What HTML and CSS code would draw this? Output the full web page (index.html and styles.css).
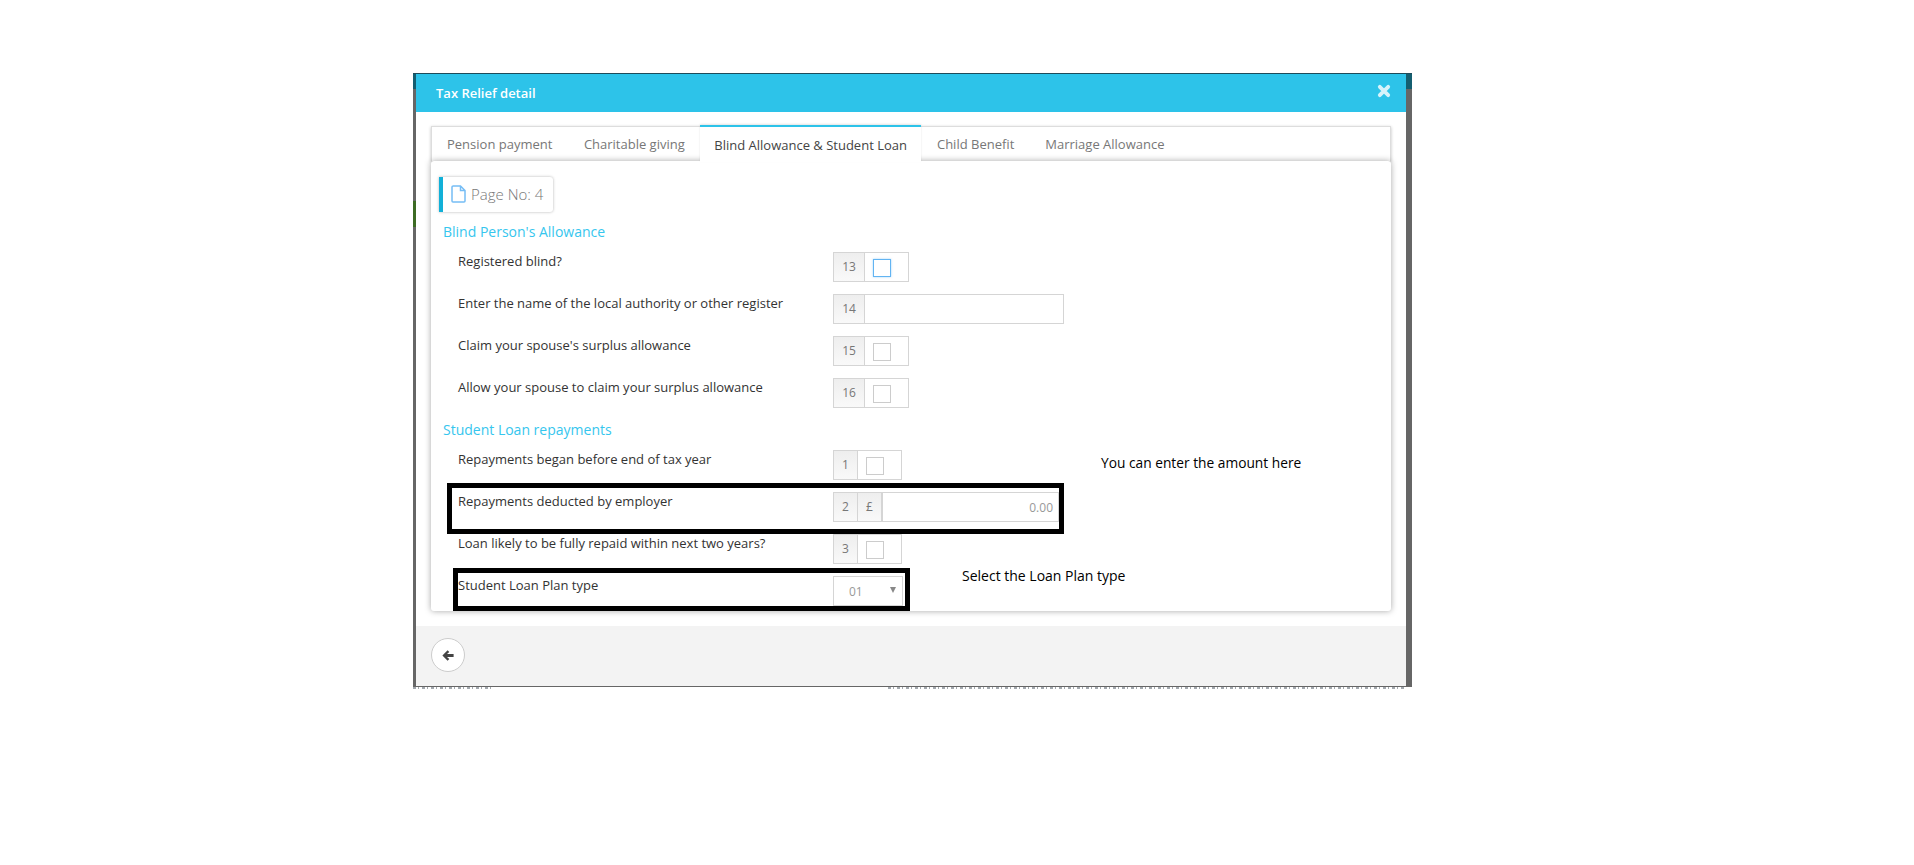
FILE: index.html
```html
<!DOCTYPE html>
<html lang="en">
<head>
<meta charset="utf-8">
<title>Tax Relief detail</title>
<link rel="stylesheet" href="styles.css">
</head>
<body>
<div class="backdrop">
  <div class="modal">
    <header class="modal-head">
      <span class="modal-title">Tax Relief detail</span>
      <svg class="close" viewBox="0 0 14 14" width="14" height="14"><path d="M2.8 2.8 L11.2 11.2 M11.2 2.8 L2.8 11.2"/></svg>
    </header>
    <div class="modal-body">
      <nav class="tabs">
        <a class="tab tab-first">Pension payment</a>
        <a class="tab tab-second">Charitable giving</a>
        <a class="tab tab-active">Blind Allowance &amp; Student Loan</a>
        <a class="tab tab-fourth">Child Benefit</a>
        <a class="tab">Marriage Allowance</a>
      </nav>
      <section class="panel">
        <div class="page-no">
          <svg class="file" viewBox="0 0 15 18" width="15" height="18"><path d="M1.5 1 H9.5 L14 5.5 V16 Q14 17 13 17 H2 Q1 17 1 16 V2 Q1 1 2 1 Z M9.5 1 V5.5 H14"/></svg>
          <span>Page No: 4</span>
        </div>
        <h3 class="section">Blind Person's Allowance</h3>
        <div class="row"><label>Registered blind?</label>
          <div class="field"><span class="addon a32">13</span><span class="check-cell"><i class="check focus"></i></span></div></div>
        <div class="row"><label>Enter the name of the local authority or other register</label>
          <div class="field"><span class="addon a32">14</span><span class="text-cell"></span></div></div>
        <div class="row"><label>Claim your spouse's surplus allowance</label>
          <div class="field"><span class="addon a32">15</span><span class="check-cell"><i class="check"></i></span></div></div>
        <div class="row"><label>Allow your spouse to claim your surplus allowance</label>
          <div class="field"><span class="addon a32">16</span><span class="check-cell"><i class="check"></i></span></div></div>
        <h3 class="section section-2">Student Loan repayments</h3>
        <div class="row"><label>Repayments began before end of tax year</label>
          <div class="field"><span class="addon a24">1</span><span class="check-cell"><i class="check"></i></span></div></div>
        <div class="row"><label>Repayments deducted by employer</label>
          <div class="field"><span class="addon a24">2</span><span class="addon a25">£</span><span class="amount">0.00</span></div></div>
        <div class="row"><label>Loan likely to be fully repaid within next two years?</label>
          <div class="field"><span class="addon a24">3</span><span class="check-cell"><i class="check"></i></span></div></div>
        <div class="row"><label>Student Loan Plan type</label>
          <div class="field"><span class="select">01<b class="caret"></b></span></div></div>
      </section>
    </div>
    <footer class="modal-foot">
      <button class="back" type="button"><svg viewBox="0 0 12 11" width="12" height="11"><path d="M5.6 0.3 L7.3 2 L5 4 H11.6 V7 H5 L7.3 9 L5.6 10.7 L0.4 5.5 Z"/></svg></button>
    </footer>
  </div>
</div>
<div class="residue residue-left"></div>
<div class="residue residue-right"></div>
<div class="mark mark-amount"></div>
<div class="mark mark-plan"></div>
<p class="note note-amount">You can enter the amount here</p>
<p class="note note-plan">Select the Loan Plan type</p>
</body>
</html>
```
FILE: styles.css
```css
* { box-sizing: border-box; }
html, body { margin: 0; padding: 0; }
body { position: relative; min-height: 865px; background: #fff; font-family: "Open Sans", sans-serif; color: #333; overflow: hidden; }
.backdrop {
  width: 999px; height: 614px; margin: 73px 0 0 413px; padding: 1px 6px 1px 3px;
  background:
    linear-gradient(#1d4b5a 1px, #145e70 1px, #145e70 16px, transparent 16px) no-repeat,
    linear-gradient(transparent 128px, #3d6b24 128px, #3d6b24 154px, transparent 154px) no-repeat 0 0 / 3px 100%,
    #666;
}
.modal { width: 990px; height: 612px; display: flex; flex-direction: column; background: #fff; }
.modal-head { height: 38px; flex: none; display: flex; align-items: center; justify-content: space-between; padding: 0 15px 0 20px; background: #2dc3e9; color: #fff; }
.modal-title { font-size: 13px; font-weight: 600; }
.close { margin-bottom: 5px; fill: none; stroke: #d6f3fb; stroke-width: 3.8; stroke-linecap: round; }
.modal-body { flex: 1; padding: 14px 15px 15px; }
.tabs { display: flex; height: 35px; background: #fff; border: 1px solid #ddd; border-bottom: 0; box-shadow: 0 1px 3px rgba(0,0,0,.25); }
.tab { padding: 7px 16px 0; font-size: 13px; line-height: 20px; color: #777; }
.tab-first { padding-left: 15px; padding-right: 15.5px; }
.tab-second { padding-right: 15.5px; }
.tab-fourth { padding-right: 15px; }
.tab-active { position: relative; top: -2px; height: 37px; padding: 8px 14px 0; color: #444; background: #fff; border-top: 2px solid #2dc3e9; box-shadow: 0 -1px 2px rgba(0,0,0,.1); z-index: 2; }
.panel { position: relative; height: 450px; padding: 16px 8px 0; background: #fff; border-radius: 3px; box-shadow: 0 0 6px rgba(0,0,0,.35); }
.page-no { display: flex; align-items: center; gap: 5px; width: 114px; height: 35px; padding: 0 0 2px 8px; font-size: 15px; font-weight: 300; color: #777; background: #fff; border-left: 4px solid #11b0d8; border-radius: 0 3px 3px 0; box-shadow: 0 0 3px rgba(0,0,0,.3); }
.file { fill: none; stroke: #76bdf5; stroke-width: 1.5; }
.section { margin: 10px 0 10px 4px; font-size: 14px; line-height: 20px; font-weight: 400; color: #36c6ee; }
.section-2 { margin-top: 12px; }
.row { display: flex; height: 30px; margin-bottom: 12px; padding-left: 19px; }
.row:last-child { margin-bottom: 0; }
.row label { width: 375px; flex: none; font-size: 13px; line-height: 18px; color: #333; }
.field { display: flex; height: 30px; }
.addon { display: flex; align-items: center; justify-content: center; height: 30px; padding-bottom: 2px; font-size: 12px; color: #777; background: linear-gradient(#eee, #f9f9f9); border: 1px solid #d5d5d5; border-right: 0; }
.a32 { width: 31px; }
.a24 { width: 24px; }
.a25 { width: 24px; }
.check-cell { display: flex; align-items: center; width: 45px; padding-left: 8px; height: 30px; border: 1px solid #d5d5d5; }
.check { display: block; width: 18px; height: 18px; margin-top: 2px; background: #fff; border: 1px solid #ccc; }
.check.focus { border-color: #62b4f2; box-shadow: 0 0 2px rgba(98,180,242,.6); }
.text-cell { width: 200px; height: 30px; border: 1px solid #d5d5d5; }
.amount { display: block; width: 178px; height: 30px; padding: 0 5px 0 0; text-align: right; font-size: 12px; line-height: 30px; color: #999; border: 1px solid #d5d5d5; border-left-width: 2px; }
.select { position: relative; display: block; width: 70px; height: 30px; padding-left: 15px; font-size: 12px; line-height: 30px; color: #999; border: 1px solid #d5d5d5; }
.caret { position: absolute; right: 6px; top: 10px; border: 3px solid transparent; border-top: 6px solid #888; border-bottom: 0; }
.modal-foot { height: 60px; flex: none; display: flex; align-items: center; padding: 0 15px 2px; background: #f3f3f3; }
.back { display: flex; align-items: center; justify-content: center; width: 34px; height: 34px; padding: 0; background: #fff; border: 1px solid #ccc; border-radius: 50%; }
.back svg { fill: #444; }
.residue { position: absolute; top: 687px; height: 2px; opacity: .55; background: repeating-linear-gradient(90deg, #56606a 0 3px, transparent 3px 5px, #56606a 5px 6px, transparent 6px 9px); }
.residue-left { left: 413px; width: 78px; }
.residue-right { left: 888px; width: 518px; }
.mark { position: absolute; border: 5px solid #000; }
.mark-amount { left: 447px; top: 483px; width: 617px; height: 51px; }
.mark-plan { left: 453px; top: 568px; width: 457px; height: 43px; }
.note { position: absolute; margin: 0; font-size: 13.75px; line-height: 18px; color: #000; white-space: nowrap; }
.note-amount { left: 1101px; top: 454px; }
.note-plan { left: 962px; top: 567px; font-size: 14px; }
```
